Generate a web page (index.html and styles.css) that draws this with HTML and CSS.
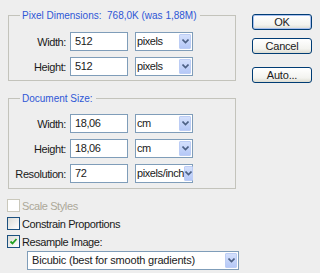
FILE: index.html
```html
<!DOCTYPE html>
<html lang="en">
<head>
    <meta charset="UTF-8">
    <title>Image Size</title>
    <link rel="stylesheet" href="styles.css">
</head>
<body>
    <div class="dialog">
        <div class="main">
            <fieldset class="group pixel-dims">
                <legend>Pixel Dimensions:&nbsp; 768,0K (was 1,88M)</legend>
                <div class="row">
                    <span class="lbl">Width:</span>
                    <span class="field">512</span>
                    <span class="combo"><span class="combo-text">pixels</span><span class="combo-btn"><svg width="7" height="5" viewBox="0 0 7 5"><path d="M0.5 0.5 L3.5 3.5 L6.5 0.5" fill="none" stroke="#4d6185" stroke-width="1.6"/></svg></span></span>
                </div>
                <div class="row">
                    <span class="lbl">Height:</span>
                    <span class="field">512</span>
                    <span class="combo"><span class="combo-text">pixels</span><span class="combo-btn"><svg width="7" height="5" viewBox="0 0 7 5"><path d="M0.5 0.5 L3.5 3.5 L6.5 0.5" fill="none" stroke="#4d6185" stroke-width="1.6"/></svg></span></span>
                </div>
            </fieldset>

            <fieldset class="group doc-size">
                <legend>Document Size:</legend>
                <div class="row">
                    <span class="lbl">Width:</span>
                    <span class="field">18,06</span>
                    <span class="combo"><span class="combo-text">cm</span><span class="combo-btn"><svg width="7" height="5" viewBox="0 0 7 5"><path d="M0.5 0.5 L3.5 3.5 L6.5 0.5" fill="none" stroke="#4d6185" stroke-width="1.6"/></svg></span></span>
                </div>
                <div class="row">
                    <span class="lbl">Height:</span>
                    <span class="field">18,06</span>
                    <span class="combo"><span class="combo-text">cm</span><span class="combo-btn"><svg width="7" height="5" viewBox="0 0 7 5"><path d="M0.5 0.5 L3.5 3.5 L6.5 0.5" fill="none" stroke="#4d6185" stroke-width="1.6"/></svg></span></span>
                </div>
                <div class="row">
                    <span class="lbl">Resolution:</span>
                    <span class="field">72</span>
                    <span class="combo"><span class="combo-text">pixels/inch</span><span class="combo-btn"><svg width="7" height="5" viewBox="0 0 7 5"><path d="M0.5 0.5 L3.5 3.5 L6.5 0.5" fill="none" stroke="#4d6185" stroke-width="1.6"/></svg></span></span>
                </div>
            </fieldset>

            <div class="checks">
                <div class="check disabled"><span class="box"></span>Scale Styles</div>
                <div class="check"><span class="box"></span>Constrain Proportions</div>
                <div class="check"><span class="box"><svg width="9" height="9" viewBox="0 0 9 9"><path d="M1.5 4.5 L3.5 6.5 L7.5 2" fill="none" stroke="#21a121" stroke-width="1.8"/></svg></span>Resample Image:</div>
            </div>

            <span class="combo wide"><span class="combo-text">Bicubic (best for smooth gradients)</span><span class="combo-btn"><svg width="7" height="5" viewBox="0 0 7 5"><path d="M0.5 0.5 L3.5 3.5 L6.5 0.5" fill="none" stroke="#4d6185" stroke-width="1.6"/></svg></span></span>
        </div>

        <div class="buttons">
            <button class="btn default">OK</button>
            <button class="btn">Cancel</button>
            <button class="btn auto">Auto...</button>
        </div>
    </div>
</body>
</html>
```

FILE: styles.css
```css
body {
    margin: 0;
    background: #eeeeee;
    font-family: "Liberation Sans", Arial, sans-serif;
    font-size: 11px;
    letter-spacing: -0.4px;
    color: #1a1a1a;
}
.dialog {
    display: flex;
    padding: 9px 0 0 7px;
    width: 320px;
    height: 273px;
    box-sizing: border-box;
}
.main {
    width: 232px;
    display: flex;
    flex-direction: column;
}
.group {
    margin: 0 0 0 1px;
    width: 228px;
    box-sizing: border-box;
    border: 1px solid #c3c3bb;
    padding: 0;
    min-width: 0;
}
.group legend {
    margin-left: 11px;
    padding: 0 3px 0 2px;
    color: #2f57d6;
    font-size: 10px;
    letter-spacing: 0;
    line-height: 13px;
}
.pixel-dims {
    padding: 10px 0 4px 0;
}
.doc-size {
    margin-top: 11px;
    padding: 9px 0 5px 0;
}
.row {
    display: flex;
    align-items: center;
    height: 19px;
    margin-top: 6px;
}
.row:first-of-type {
    margin-top: 0;
}
.lbl {
    width: 57px;
    text-align: right;
    margin-right: 4px;
}
.field {
    width: 58px;
    height: 19px;
    box-sizing: border-box;
    border: 1px solid #7f9db9;
    background: #fff;
    padding-left: 4px;
    line-height: 17px;
    margin-right: 7px;
}
.combo {
    display: flex;
    align-items: center;
    justify-content: space-between;
    width: 58px;
    height: 19px;
    box-sizing: border-box;
    border: 1px solid #7f9db9;
    background: #fff;
}
.combo-text {
    padding-left: 1px;
    white-space: nowrap;
    line-height: 17px;
}
.combo-btn {
    width: 12px;
    height: 15px;
    margin-right: 1px;
    box-sizing: border-box;
    border: 1px solid #bccdf5;
    border-radius: 1px;
    background: linear-gradient(#d4e0fc, #b5c8f7);
    display: flex;
    align-items: center;
    justify-content: center;
}
.checks {
    margin-top: 8px;
    display: flex;
    flex-direction: column;
}
.check {
    display: flex;
    align-items: center;
    height: 17px;
}
.check + .check {
    margin-top: 1px;
}
.box {
    width: 13px;
    height: 13px;
    box-sizing: border-box;
    border: 1px solid #1c5180;
    background: linear-gradient(135deg, #dcdcd7, #ffffff);
    margin-right: 2px;
    display: flex;
    align-items: center;
    justify-content: center;
}
.check.disabled {
    color: #aca899;
}
.check.disabled .box {
    border-color: #cac8bb;
    background: #fff;
}
.combo.wide {
    width: 212px;
    margin: 1px 0 0 20px;
}
.combo.wide .combo-text {
    padding-left: 4px;
    letter-spacing: -0.2px;
}
.buttons {
    display: flex;
    flex-direction: column;
    margin-left: 13px;
    padding-top: 5px;
}
.btn {
    width: 60px;
    height: 16px;
    padding: 0;
    font-family: "Liberation Sans", Arial, sans-serif;
    font-size: 11px;
    letter-spacing: -0.2px;
    color: #1a1a1a;
    border: 1px solid #003c74;
    border-radius: 3px;
    background: linear-gradient(#ffffff, #f3f3ef 70%, #dcdcd2);
    margin-bottom: 8px;
}
.btn.default {
    box-shadow: inset 0 0 0 1px #a8c0ee;
}
.btn.auto {
    margin-top: 5px;
}
```
